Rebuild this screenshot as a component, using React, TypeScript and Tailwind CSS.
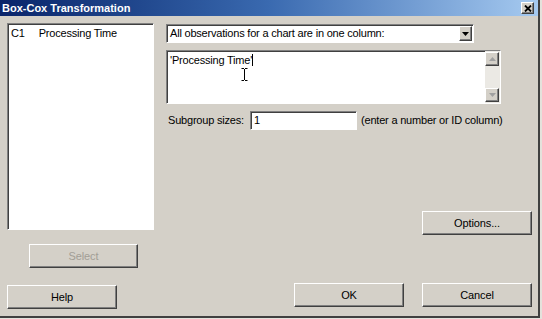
import React from 'react';

const raised =
  'border border-t-white border-l-white border-b-[#404040] border-r-[#404040] shadow-[inset_-1px_-1px_0_#808080]';
const sunken =
  'border border-t-[#808080] border-l-[#808080] border-b-white border-r-white shadow-[inset_1px_1px_0_#404040]';

function Btn({ label, className = '', disabled = false }: { label: string; className?: string; disabled?: boolean }) {
  return (
    <div
      className={`flex items-center justify-center bg-[#d4d0c8] text-[11px] tracking-[-0.1px] ${raised} ${
        disabled ? 'text-[#a29e96]' : 'text-black'
      } ${className}`}
    >
      {label}
    </div>
  );
}

function Arrow({ color = '#000' }: { color?: string }) {
  return (
    <svg width="7" height="4" viewBox="0 0 7 4">
      <path d="M0 0h7L3.5 4z" fill={color} />
    </svg>
  );
}

export default function App() {
  return (
    <div
      className="w-[542px] h-[319px] bg-[#e4e2dc] overflow-hidden"
      style={{ fontFamily: '"Liberation Sans", Arial, sans-serif' }}
    >
      <div className="w-[540px] h-[318px] bg-[#d4d0c8] border-r-2 border-b-2 border-[#404040] flex flex-col">
        {/* title bar */}
        <div className="h-[16px] flex items-center justify-between pl-[2px] pr-[4px] bg-gradient-to-r from-[#0a246a] via-[#3a6ab0] to-[#a6caf0]">
          <span className="text-white text-[11px] leading-none font-bold">Box-Cox Transformation</span>
          <div className={`w-[13px] h-[12px] flex items-center justify-center bg-[#d4d0c8] ${raised}`}>
            <svg width="8" height="7" viewBox="0 0 8 7">
              <path d="M1 0.5l6 6M7 0.5l-6 6" stroke="#000" strokeWidth="1.8" />
            </svg>
          </div>
        </div>

        <div className="flex-1 flex flex-col text-[11px] tracking-[-0.2px] text-black">
          <div className="flex flex-1">
            {/* left column */}
            <div className="w-[166px] pl-[7px] pt-[7px] flex flex-col">
              <div className={`w-[147px] h-[207px] bg-white ${sunken} pt-[4px] pl-[3px] leading-none flex gap-[14px]`}>
                <span>C1</span>
                <span>Processing Time</span>
              </div>
              <Btn label="Select" disabled className="w-[109px] h-[24px] ml-[22px] mt-[14px]" />
            </div>

            {/* right column */}
            <div className="flex-1 pt-[8px] pr-[6px] flex flex-col">
              <div className={`w-[308px] h-[19px] bg-white ${sunken} flex items-center justify-between pl-[3px] pr-[1px]`}>
                <span>All observations for a chart are in one column:</span>
                <div className={`w-[13px] h-[15px] flex items-center justify-center bg-[#d4d0c8] ${raised}`}>
                  <Arrow />
                </div>
              </div>
              <div className={`mt-[7px] w-[335px] h-[54px] bg-white ${sunken} flex`}>
                <div className="flex-1 pl-[3px] pt-[4px] relative leading-none">
                  <span>'Processing Time'</span>
                  <span className="inline-block w-px h-[12px] bg-black align-middle -mt-[2px]" />
                  <svg className="absolute left-[74px] top-[17px]" width="7" height="13" viewBox="0 0 7 13">
                    <path d="M0.5 0.5h2.5M4 0.5h2.5M3.5 1v11M0.5 12.5h2.5M4 12.5h2.5" stroke="#000" strokeWidth="1" />
                  </svg>
                </div>
                <div className="w-[15px] h-full bg-[#ebe9e4] flex flex-col justify-between py-[1px] pr-[1px]">
                  <div className={`w-[14px] h-[14px] flex items-center justify-center bg-[#d4d0c8] ${raised}`}>
                    <div className="rotate-180 flex">
                      <Arrow color="#a0a0a0" />
                    </div>
                  </div>
                  <div className={`w-[14px] h-[14px] flex items-center justify-center bg-[#d4d0c8] ${raised}`}>
                    <Arrow color="#a0a0a0" />
                  </div>
                </div>
              </div>
              <div className="mt-[7px] flex items-center whitespace-nowrap">
                <span className="ml-[2px] w-[82px]">Subgroup sizes:</span>
                <div className={`w-[107px] h-[19px] bg-white ${sunken} pl-[3px] flex items-center`}>1</div>
                <span className="ml-[4px]">(enter a number or ID column)</span>
              </div>
              <Btn label="Options..." className="self-end w-[110px] h-[24px] mt-[81px]" />
            </div>
          </div>

          {/* bottom row */}
          <div className="h-[24px] mb-[9px] flex justify-between pl-[7px] pr-[6px]">
            <Btn label="Help" className="w-[110px] h-[24px] mt-[2px]" />
            <div className="flex gap-[18px]">
              <Btn label="OK" className="w-[110px] h-[24px]" />
              <Btn label="Cancel" className="w-[110px] h-[24px]" />
            </div>
          </div>
        </div>
      </div>
    </div>
  );
}
